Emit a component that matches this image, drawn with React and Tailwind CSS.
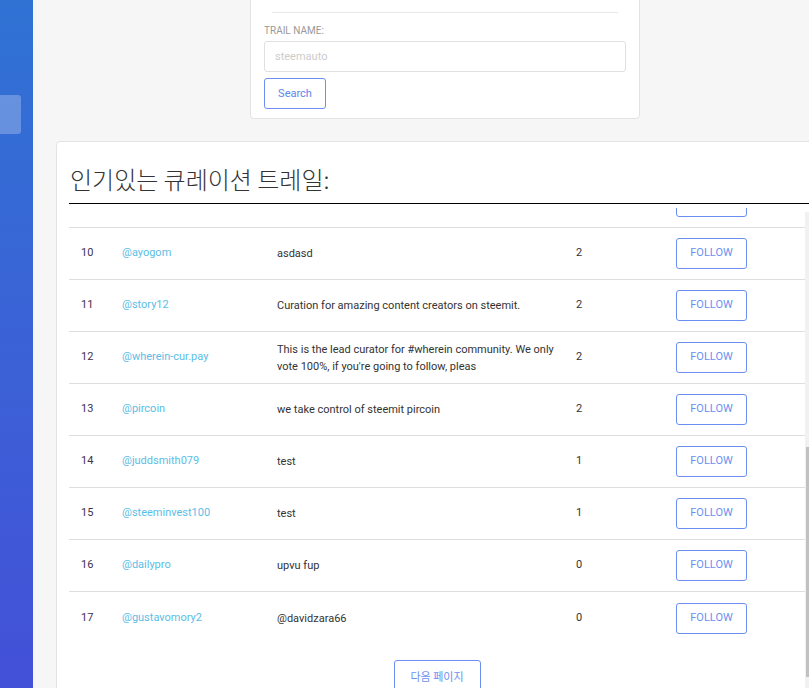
import React from "react";

const trails = [
  { id: 1, name: "@steemauto", desc: "Official curation trail of steemauto.com", count: 48 },
  { id: 2, name: "@curationkiwi", desc: "Curating quality posts from new authors", count: 21 },
  { id: 3, name: "@kr-curation", desc: "KR community curation trail", count: 12 },
  { id: 4, name: "@blocktrades", desc: "blocktrades curation", count: 9 },
  { id: 5, name: "@ocd", desc: "OCD community curation", count: 7 },
  { id: 6, name: "@appics", desc: "appics trail", count: 5 },
  { id: 7, name: "@sndbox", desc: "sndbox curation", count: 4 },
  { id: 8, name: "@dsound", desc: "dsound music trail", count: 3 },
  { id: 9, name: "@tasteem", desc: "food and places", count: 3 },
  { id: 10, name: "@ayogom", desc: "asdasd", count: 2 },
  { id: 11, name: "@story12", desc: "Curation for amazing content creators on steemit.", count: 2 },
  {
    id: 12,
    name: "@wherein-cur.pay",
    desc: "This is the lead curator for #wherein community. We only vote 100%, if you're going to follow, pleas",
    count: 2,
  },
  { id: 13, name: "@pircoin", desc: "we take control of steemit pircoin", count: 2 },
  { id: 14, name: "@juddsmith079", desc: "test", count: 1 },
  { id: 15, name: "@steeminvest100", desc: "test", count: 1 },
  { id: 16, name: "@dailypro", desc: "upvu fup", count: 0 },
  { id: 17, name: "@gustavomory2", desc: "@davidzara66", count: 0 },
];

export default function App() {
  // table list is scrolled down to row 10
  const scrollRef = (el) => {
    if (el) el.scrollTop = 448;
  };

  return (
    <div className="flex h-screen w-screen overflow-hidden bg-[#f6f6f6] font-['Roboto','Noto_Sans_CJK_KR',sans-serif] text-[#333]">
      {/* Sidebar */}
      <aside className="w-[33px] shrink-0 bg-linear-to-b from-[#2f72d4] to-[#4350d8] pt-[95px]">
        <div className="h-[39px] w-[21px] rounded-r-[3px] bg-white/25" />
      </aside>

      <main className="w-[824px] shrink-0 px-[23px]">
        {/* Search card */}
        <div className="mx-auto -mt-[10px] w-[390px] rounded-[4px] border border-[#e3e3e3] bg-white px-[13px] pb-[9px] pt-[21px]">
          <hr className="mx-[8px] border-[#e8e8e8]" />
          <label className="mt-[12px] block text-[10px] leading-[12px] uppercase text-[#999]">
            Trail name:
          </label>
          <input
            type="text"
            placeholder="steemauto"
            className="mt-[4px] block h-[31px] w-full rounded-[3px] border border-[#e0e0e0] px-[10px] text-[11px] outline-none placeholder:text-[#ccc]"
          />
          <button className="mt-[6px] block h-[31px] w-[62px] rounded-[3px] border border-[#6b8ff0] pt-px text-[11px] text-[#5b86ee]">
            Search
          </button>
        </div>

        {/* Popular trails card */}
        <div className="mt-[22px] rounded-[4px] border border-[#e3e3e3] bg-white pl-[12px] pt-[21px]">
          <h2 className="border-b border-black pb-[8px] pl-px font-['Noto_Sans_CJK_KR',sans-serif] text-[24px] font-light leading-[32px] text-[#333]">
            인기있는 큐레이션 트레일:
          </h2>

          <div className="mt-[4px] flex h-[496px] w-[748px]">
            <div ref={scrollRef} className="w-[736px] overflow-hidden">
              {trails.map((t, i) => (
                <div
                  key={t.id}
                  className={`grid h-[52px] grid-cols-[41px_155px_299px_100px_1fr] items-center text-[11px] ${
                    i < trails.length - 1 ? "border-b border-[#dedede]" : ""
                  }`}
                >
                  <div className="pl-[12px] text-[#3b3350]">{t.id}</div>
                  <div className="pl-[12px] text-[#5bbde6]">{t.name}</div>
                  <div className="pl-[12px] pr-[4px] leading-[17px] text-[#333]">{t.desc}</div>
                  <div className="pl-[12px] text-[#333]">{t.count}</div>
                  <div className="pl-[12px]">
                    <button className="h-[31px] w-[71px] rounded-[3px] border border-[#6b8ff0] text-[11px] uppercase text-[#6b8ff0]">
                      Follow
                    </button>
                  </div>
                </div>
              ))}
              <div className="flex justify-center pb-[20px] pt-[16px]">
                <button className="h-[32px] w-[87px] rounded-[3px] border border-[#6b8ff0] font-['Noto_Sans_CJK_KR',sans-serif] text-[11px] text-[#6b8ff0]">
                  다음 페이지
                </button>
              </div>
            </div>

            {/* scrollbar */}
            <div className="w-[12px] pt-[4px]">
              <div className="h-full bg-[#f1f1f1] pt-[235px]">
                <div className="ml-px mr-[3px] h-[230px] bg-[#c1c1c1]" />
              </div>
            </div>
          </div>
        </div>
      </main>
    </div>
  );
}
